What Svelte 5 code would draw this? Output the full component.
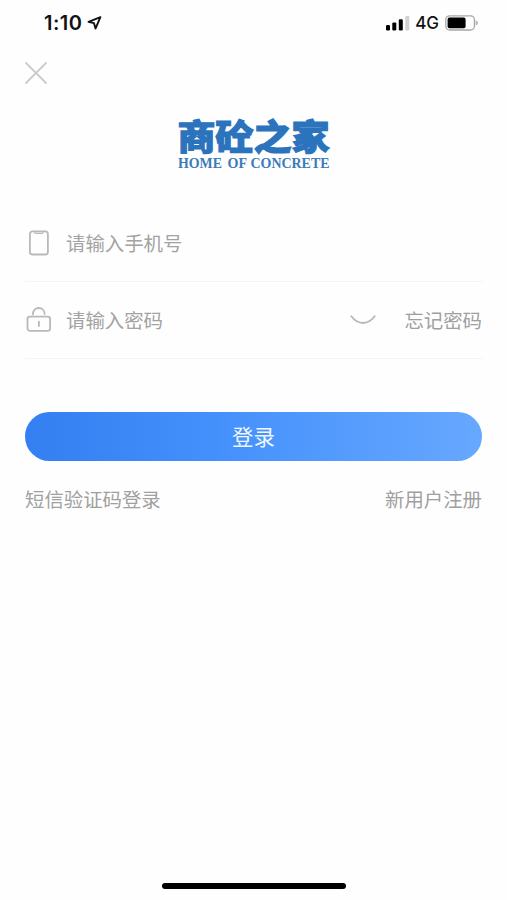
<script lang="ts">
  let phone = $state('');
  let password = $state('');
  let visible = $state(false);

  function handleSubmit(event: SubmitEvent) {
    event.preventDefault();
  }
</script>

<div class="screen">
  <header class="status-bar">
    <div class="status-left">
      <span class="time">1:10</span>
      <svg class="location" width="15" height="15" viewBox="0 0 15 15" fill="none" stroke="#111" stroke-width="1.9" stroke-linejoin="round">
        <path d="M13.4 1.2 1.5 5.8 7 7.2 8.5 12.6Z" />
      </svg>
    </div>
    <div class="status-right">
      <svg width="24" height="16" viewBox="0 0 24 16">
        <rect x="0" y="10" width="4" height="5.5" rx="1.2" />
        <rect x="6.3" y="7.4" width="4" height="8.1" rx="1.2" />
        <rect x="12.8" y="4.2" width="4" height="11.3" rx="1.2" />
        <rect x="19.3" y="1" width="4" height="14.5" rx="1.2" fill="#d2d2d2" />
      </svg>
      <span class="network">4G</span>
      <svg width="34" height="16" viewBox="0 0 34 16">
        <rect x="0.8" y="0.8" width="28.6" height="14.2" rx="3.8" fill="none" stroke="#a6a6a6" stroke-width="1.3" />
        <rect x="2.6" y="2.6" width="18" height="10.6" rx="1.8" />
        <path d="M30.6 5.2Q33 6 33 7.9T30.6 10.6Z" fill="#b5b5b5" />
      </svg>
    </div>
  </header>

  <main class="content">
    <button class="close" type="button" aria-label="关闭">
      <svg width="22" height="22" viewBox="0 0 22 22" fill="none" stroke="#cbcbcb" stroke-width="1.8" stroke-linecap="round">
        <path d="M1 1 21 21M21 1 1 21" />
      </svg>
    </button>

    <div class="logo">
      <div class="logo-name">商砼之家</div>
      <svg class="logo-sub" width="154" height="16" viewBox="0 0 154 16">
        <text x="1" y="12" textLength="44" lengthAdjust="spacingAndGlyphs">HOME</text>
        <text x="50.5" y="12" textLength="19.5" lengthAdjust="spacingAndGlyphs">OF</text>
        <text x="73.5" y="12" textLength="79" lengthAdjust="spacingAndGlyphs">CONCRETE</text>
      </svg>
    </div>

    <form onsubmit={handleSubmit}>
      <div class="field">
        <svg class="field-icon" width="28" height="28" viewBox="0 0 28 28" fill="none" stroke="#b9b9b9" stroke-width="1.8">
          <rect x="4.9" y="2.3" width="18" height="23.2" rx="2.6" />
          <path d="M9.5 3.2Q10 4.4 11.2 4.4H16.6Q17.8 4.4 18.3 3.2" stroke-width="1.2" />
        </svg>
        <input bind:value={phone} type="tel" placeholder="请输入手机号" />
      </div>

      <div class="field">
        <svg class="field-icon" width="28" height="28" viewBox="0 0 28 28" fill="none" stroke="#b9b9b9" stroke-width="1.8" stroke-linecap="round">
          <rect x="2.5" y="10.6" width="22.6" height="14.3" rx="2.4" />
          <path d="M7.9 8.6C7.9 4.8 10.2 2 13.8 2S19.6 4.8 19.6 7.9" />
          <path d="M13.9 15.6V20" />
        </svg>
        <input bind:value={password} type={visible ? 'text' : 'password'} placeholder="请输入密码" />
        <button class="eye" type="button" aria-label="显示密码" onclick={() => (visible = !visible)}>
          <svg width="26" height="10" viewBox="0 0 26 10" fill="none" stroke="#b7b7b7" stroke-width="1.8" stroke-linecap="round">
            <path d="M1.3 1.3Q6.5 8 13 8T24.7 1.3" />
          </svg>
        </button>
        <button class="link" type="button">忘记密码</button>
      </div>

      <button class="submit" type="submit">登录</button>
    </form>

    <div class="links">
      <button class="link" type="button">短信验证码登录</button>
      <button class="link" type="button">新用户注册</button>
    </div>
  </main>

  <div class="home-indicator"></div>
</div>

<style>
  :global(body) {
    background: #fefefe;
  }

  .screen {
    box-sizing: border-box;
    display: flex;
    flex-direction: column;
    align-items: center;
    width: 507px;
    height: 900px;
    padding-bottom: 11px;
    background: #fefefe;
    font-family: 'Noto Sans CJK SC', sans-serif;
    overflow: hidden;
  }

  button {
    padding: 0;
    border: none;
    background: none;
    font-family: inherit;
    cursor: pointer;
  }

  svg {
    display: block;
  }

  .status-bar {
    box-sizing: border-box;
    display: flex;
    justify-content: space-between;
    align-items: center;
    width: 100%;
    height: 46px;
    padding: 0 28px 0 44px;
    font-family: Inter, 'Liberation Sans', sans-serif;
    color: #111;
  }

  .status-left,
  .status-right {
    display: flex;
    align-items: center;
  }

  .time {
    font-size: 20px;
    font-weight: 600;
    line-height: 24px;
    letter-spacing: 0.5px;
  }

  .location {
    margin-left: 5px;
  }

  .network {
    margin: 0 6px 0 5px;
    font-size: 17px;
    font-weight: 500;
    line-height: 20px;
  }

  .content {
    box-sizing: border-box;
    flex: 1;
    width: 100%;
    padding: 16px 25px 0;
  }

  .close {
    display: block;
    height: 22px;
  }

  .logo {
    box-sizing: border-box;
    display: flex;
    flex-direction: column;
    align-items: center;
    height: 121px;
    padding-top: 33px;
    color: #2b74bd;
  }

  .logo-name {
    height: 39px;
    font-size: 38px;
    font-weight: 900;
    line-height: 38px;
    -webkit-text-stroke: 1.3px #2b74bd;
    transform: scaleY(0.93);
    transform-origin: top;
  }

  .logo-sub {
    overflow: visible;
    font-family: 'Liberation Serif', serif;
    font-size: 14.5px;
    font-weight: 700;
    fill: #3b7cb8;
  }

  .field {
    box-sizing: border-box;
    display: flex;
    align-items: center;
    height: 77px;
    border-bottom: 1px solid #f4f4f4;
  }

  .field-icon {
    flex: none;
    margin-right: 13px;
  }

  input {
    flex: 1;
    min-width: 0;
    padding: 0;
    border: none;
    outline: none;
    background: transparent;
    font-family: inherit;
    font-size: 19.4px;
    line-height: 28px;
    color: #333;
  }

  input::placeholder {
    color: #a3a3a3;
    opacity: 1;
  }

  .eye {
    margin-right: 28px;
  }

  .link {
    font-size: 19.4px;
    line-height: 28px;
    color: #a0a0a0;
  }

  .submit {
    display: block;
    width: 100%;
    height: 49px;
    margin-top: 53px;
    padding-bottom: 2px;
    border-radius: 25px;
    background: linear-gradient(90deg, #347ff1 0%, #438ffb 40%, #67a8ff 100%);
    font-size: 21.5px;
    line-height: 46px;
    color: #eef6ff;
  }

  .links {
    display: flex;
    justify-content: space-between;
    margin-top: 24px;
  }

  .home-indicator {
    width: 184px;
    height: 6px;
    border-radius: 3px;
    background: #000;
  }
</style>
